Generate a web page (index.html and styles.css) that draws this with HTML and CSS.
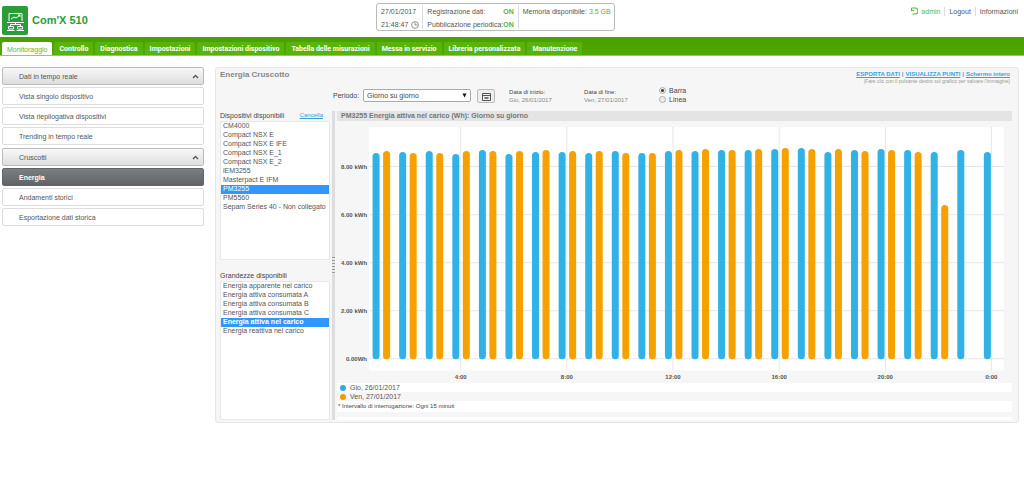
FILE: index.html
```html
<!DOCTYPE html>
<html lang="it">
<head>
<meta charset="utf-8">
<title>Com'X 510</title>
<link rel="stylesheet" href="styles.css">
</head>
<body>
<header class="top">
  <div class="brand">
    <svg class="logo" viewBox="0 0 26 29" aria-hidden="true">
      <rect width="26" height="29" rx="2" fill="#2a9c3a"/>
      <g fill="none" stroke="#fff" stroke-width="1">
        <path d="M7 15V7.500H20V15M5 16.500H22"/>
        <path d="M9 13l3-2 2 1 4-3M16 9h2v2" />
        <path d="M8.500 20v-1.500h10V20M13.500 16.500v2"/>
        <path d="M6.500 20.500h5v2.500h-5zM15.500 20.500h5v2.500h-5z"/>
        <path d="M5 24.500h7.500M14.500 24.500H22"/>
      </g>
    </svg>
    <h1 class="brand-name">Com'X 510</h1>
  </div>
  <div class="status">
    <div class="status-cell">
      <span>27/01/2017</span>
      <span class="clock-row">21:48:47
        <svg class="clock" viewBox="0 0 8 8" aria-hidden="true"><circle cx="4" cy="4" r="3.400" fill="none" stroke="#777" stroke-width=".8"/><path d="M4 1.500V4H6.500" fill="none" stroke="#777" stroke-width=".8"/></svg>
      </span>
    </div>
    <div class="status-cell status-wide">
      <span class="pair">Registrazione dati: <b class="on">ON</b></span>
      <span class="pair">Pubblicazione periodica: <b class="on">ON</b></span>
    </div>
    <div class="status-cell">
      <span>Memoria disponibile: <span class="on">3.5 GB</span></span>
    </div>
  </div>
  <nav class="user" aria-label="Utente">
    <a class="user-link user-name" href="#"><svg class="user-icon" viewBox="0 0 8 8" aria-hidden="true"><path d="M1.500 1v2.500H4M1.500 1H5a2.500 2.500 0 0 1 0 6H2.500" fill="none" stroke="#69b52f" stroke-width="1.100"/></svg>admin</a>
    <a class="user-link" href="#">Logout</a>
    <a class="user-link" href="#">Informazioni</a>
  </nav>
</header>

<nav class="tabs" aria-label="Menu principale">
  <a class="tab tab-active" href="#">Monitoraggio</a>
  <a class="tab" href="#">Controllo</a>
  <a class="tab" href="#">Diagnostica</a>
  <a class="tab" href="#">Impostazioni</a>
  <a class="tab" href="#">Impostazioni dispositivo</a>
  <a class="tab" href="#">Tabella delle misurazioni</a>
  <a class="tab" href="#">Messa in servizio</a>
  <a class="tab" href="#">Libreria personalizzata</a>
  <a class="tab" href="#">Manutenzione</a>
</nav>

<div class="layout">
  <aside class="side">
    <section class="side-group">
      <button class="side-head" type="button">Dati in tempo reale
        <svg class="chevron" viewBox="0 0 7 5" aria-hidden="true"><path d="M1 4L3.500 1.500L6 4" fill="none" stroke="#555" stroke-width="1.300"/></svg>
      </button>
      <a class="side-item" href="#">Vista singolo dispositivo</a>
      <a class="side-item" href="#">Vista riepilogativa dispositivi</a>
      <a class="side-item" href="#">Trending in tempo reale</a>
    </section>
    <section class="side-group">
      <button class="side-head" type="button">Cruscotti
        <svg class="chevron" viewBox="0 0 7 5" aria-hidden="true"><path d="M1 4L3.500 1.500L6 4" fill="none" stroke="#555" stroke-width="1.300"/></svg>
      </button>
      <a class="side-item side-active" href="#">Energia</a>
      <a class="side-item" href="#">Andamenti storici</a>
      <a class="side-item" href="#">Esportazione dati storica</a>
    </section>
  </aside>

  <main class="panel">
    <div class="panel-head">
      <h2 class="panel-title">Energia Cruscotto</h2>
      <div class="export">
        <div class="export-links"><a href="#">ESPORTA DATI</a><i>|</i><a href="#">VISUALIZZA PUNTI</a><i>|</i><a href="#">Schermo intero</a></div>
        <p class="hint">(Fare clic con il pulsante destro sul grafico per salvare l'immagine)</p>
      </div>
    </div>

    <form class="filters">
      <div class="period">
        <label for="period">Periodo:</label>
        <span class="period-box">
          <select id="period" class="period-select"><option>Giorno su giorno</option></select>
          <svg class="caret" viewBox="0 0 5 5" aria-hidden="true"><path d="M.5 .5H4.500L2.500 4.500z" fill="#111"/></svg>
        </span>
      </div>
      <button class="cal" type="button" aria-label="Calendario">
        <svg class="cal-icon" viewBox="0 0 9 9" aria-hidden="true"><path d="M.5 1.500h8v7h-8zM.5 3.500h8" fill="none" stroke="#555"/><path d="M2.500 5h4v2h-4z" fill="#777"/></svg>
      </button>
      <dl class="date"><dt>Data di inizio:</dt><dd>Gio, 26/01/2017</dd></dl>
      <dl class="date"><dt>Data di fine:</dt><dd>Ven, 27/01/2017</dd></dl>
      <div class="kinds">
        <label class="kind"><input class="radio" type="radio" name="kind" checked>Barra</label>
        <label class="kind"><input class="radio" type="radio" name="kind">Linea</label>
      </div>
    </form>

    <div class="work">
      <div class="lists">
        <div class="list-block">
          <div class="list-head"><label for="devices">Dispositivi disponibili</label><a class="clear" href="#">Cancella</a></div>
          <select id="devices" class="list" size="10">
            <option>CM4000</option><option>Compact NSX E</option><option>Compact NSX E IFE</option><option>Compact NSX E_1</option><option>Compact NSX E_2</option><option>iEM3255</option><option>Masterpact E IFM</option><option selected>PM3255</option><option>PM5560</option><option>Sepam Series 40 - Non collegato</option>
          </select>
        </div>
        <div class="list-block">
          <div class="list-head"><label for="measures">Grandezze disponibili</label></div>
          <select id="measures" class="list" size="6">
            <option>Energia apparente nel carico</option><option>Energia attiva consumata A</option><option>Energia attiva consumata B</option><option>Energia attiva consumata C</option><option class="strong" selected>Energia attiva nel carico</option><option>Energia reattiva nel carico</option>
          </select>
        </div>
      </div>
      <div class="splitter"><span class="grip"></span></div>
      <section class="graph">
        <h3 class="graph-title">PM3255 Energia attiva nel carico (Wh): Giorno su giorno</h3>
        <svg id="chart" class="chart" viewBox="0 0 674 262" role="img" aria-label="Energia attiva per ora"></svg>
        <div class="legend">
          <p class="legend-row legend-white"><span class="dot dot-blue"></span>Gio, 26/01/2017</p>
          <p class="legend-row"><span class="dot dot-orange"></span>Ven, 27/01/2017</p>
          <p class="note">* Intervallo di interrogazione: Ogni 15 minuti</p>
        </div>
        <div class="foot"></div>
      </section>
    </div>
  </main>
</div>
<script src="chart.js"></script>
</body>
</html>
```

FILE: styles.css
```css
* { box-sizing: border-box; }
body {
  margin: 0;
  background: #fff;
  color: #555;
  font: 7px/9px "Liberation Sans", Arial, sans-serif;
}
h1, h2, h3, p, dl, dd { margin: 0; }
a { color: inherit; text-decoration: none; }
button, select, input { font: inherit; color: inherit; }

.top {
  display: grid;
  grid-template-columns: 13fr 239px 14fr;
  height: 37px;
  padding: 3px 6px 0 2px;
}
.brand { display: flex; align-items: center; gap: 4px; }
.logo { width: 26px; height: 29px; }
.brand-name { font-size: 11px; line-height: 13px; color: #2a9c3a; }
.status {
  display: flex;
  height: 28px;
  padding: 1px 0;
  border: 1px solid #bbb;
  border-radius: 3px;
}
.status-cell {
  display: flex;
  flex-direction: column;
  padding: 0 4px;
  line-height: 13px;
  white-space: nowrap;
}
.status-cell:first-child { padding-right: 3px; }
.status-cell + .status-cell { border-left: 1px solid #ddd; }
.status-wide { width: 96px; }
.pair { display: flex; justify-content: space-between; }
.clock-row { display: flex; align-items: center; gap: 3px; }
.clock { width: 8px; height: 8px; }
.on { color: #5cb531; }
.user { display: flex; justify-content: flex-end; padding-top: 4px; }
.user-link { padding: 0 4px; }
.user-link:last-child { padding-right: 0; }
.user-link + .user-link { border-left: 1px solid #ddd; height: 9px; }
.user-name { display: flex; gap: 3px; height: 9px; color: #69b52f; }
.user-icon { width: 8px; height: 8px; }

.tabs {
  display: flex;
  gap: 2px;
  height: 19px;
  padding: 5px 2px 0;
  background: linear-gradient(#4aa000, #50a800);
  border-bottom: 1px solid #8fcb60;
}
.tab {
  padding: 3px 5px 0;
  border-radius: 2px 2px 0 0;
  background: #58b40c;
  color: #fff;
  font-family: Roboto, "Liberation Sans", sans-serif;
  font-weight: bold;
  line-height: 9px;
  white-space: nowrap;
}
.tab-active {
  background: #fff;
  color: #69b52f;
  font-family: "Liberation Sans", Arial, sans-serif;
  font-weight: normal;
}

.layout { display: flex; align-items: flex-start; gap: 11px; padding: 11px 5px 0 2px; }
.side { flex: 0 0 202px; display: flex; flex-direction: column; gap: 3px; }
.side-group { display: flex; flex-direction: column; gap: 2px; }
.side-head, .side-item {
  display: flex;
  align-items: center;
  justify-content: space-between;
  height: 18px;
  padding: 0 4px 0 16px;
  border: 1px solid #ddd;
  border-radius: 2px;
  background: #fff;
  text-align: left;
}
.side-head { border-color: #bbb; background: linear-gradient(#f8f8f8, #dedede); }
.side-active {
  border-color: #606467;
  background: linear-gradient(#7b7f82, #606467);
  color: #fff;
  font-weight: bold;
}
.chevron { width: 7px; height: 5px; }

.panel {
  flex: 1;
  min-width: 0;
  padding: 2px 6px 2px 4px;
  border: 1px solid #e6e6e6;
  border-radius: 3px;
  background: #f6f6f6;
}
.panel-head { display: flex; justify-content: space-between; height: 18px; }
.panel-title { font-size: 8px; line-height: 10px; color: #888; }
.export { padding: 1px 2px 0 0; text-align: right; }
.export-links { color: #3b9fdc; font-size: 6px; font-weight: bold; line-height: 7px; }
.export-links a { text-decoration: underline; }
.export-links i { margin: 0 2px; font-style: normal; }
.hint { font-size: 5px; line-height: 6px; color: #999; }

.filters { display: flex; align-items: flex-start; height: 23px; padding-left: 113px; color: #444; }
.period { display: flex; align-items: center; gap: 4px; margin: 1px 6px 0 0; }
.period-box { display: grid; align-items: center; }
.period-select {
  grid-area: 1 / 1;
  width: 108px;
  height: 13px;
  padding: 0 3px;
  border: 1px solid #aaa;
  border-radius: 2px;
  background: #fff;
  appearance: none;
}
.caret { grid-area: 1 / 1; justify-self: end; width: 5px; height: 5px; margin-right: 4px; pointer-events: none; }
.cal {
  display: grid;
  place-items: center;
  width: 18px;
  height: 14px;
  margin-top: 1px;
  padding: 0;
  border: 1px solid #bbb;
  border-radius: 2px;
  background: #eee;
}
.cal-icon { width: 9px; height: 9px; }
.date { width: 75px; font-size: 6px; line-height: 8px; }
.date dd { color: #888; }
.cal + .date { margin-left: 14px; }
.kinds { display: flex; flex-direction: column; margin-top: -2px; }
.kind { display: flex; align-items: center; gap: 3px; }
.radio {
  width: 7px;
  height: 7px;
  margin: 0;
  border: 1px solid #aaa;
  border-radius: 50%;
  background: #eee;
  appearance: none;
}
.radio:checked { background: radial-gradient(#444 0 1px, #eee 2px); }

.work { display: flex; }
.lists { flex: 0 0 110px; display: flex; flex-direction: column; gap: 11px; }
.list-block { display: flex; flex-direction: column; flex: 1; }
.list-head { display: flex; justify-content: space-between; height: 10px; padding-right: 7px; color: #444; }
.clear { color: #3b9fdc; font-size: 6px; text-decoration: underline; }
.list {
  flex: 1;
  width: 100%;
  padding: 0;
  border: 1px solid #e8e8e8;
  border-radius: 2px;
  background: #fff;
  outline: 0;
  overflow: hidden;
}
.list option { min-height: 0; height: 9px; padding: 0 0 0 2px; line-height: 9px; }
.list option:checked { background: #3297fd linear-gradient(#3297fd, #3297fd); color: #fff; -webkit-text-fill-color: #fff; }
.list .strong { font-weight: bold; }
.splitter {
  flex: 0 0 3px;
  display: grid;
  align-items: center;
  margin: 0 2px;
  background: #ddd;
}
.grip { height: 17px; background: repeating-linear-gradient(#999 0 1px, #e8e8e8 1px 3px); }
.graph { flex: 1; min-width: 0; }
.graph-title { padding-left: 4px; background: #e4e4e4; color: #777; font-size: 7px; line-height: 10px; }
.chart { display: block; width: 100%; font: bold 6px "Liberation Sans", Arial, sans-serif; }
.plot { fill: #fff; }
.grid { stroke: #e6e6e6; stroke-width: 1; }
.axis { fill: #555; }
.bar-blue { fill: #30b2e7; }
.bar-orange { fill: #f5a100; }
.legend-row { display: flex; align-items: center; gap: 4px; padding-left: 3px; }
.legend-white, .foot { background: #fff; }
.dot { width: 6px; height: 6px; border-radius: 50%; }
.dot-blue { background: #30a8ee; }
.dot-orange { background: #f79800; }
.note { padding-left: 1px; background: #fff; color: #444; font-size: 6px; line-height: 11px; }
.foot { height: 3px; margin-top: 5px; }
```

FILE: chart.js
```js
const NS = "http://www.w3.org/2000/svg";
const chart = document.getElementById("chart");
const BASE = 238, LEFT = 39, PITCH = 26.54, BAR = 7;

const blue = [206, 207, 208, 205, 209, 205, 207, 207, 206, 208, 206, 208, 208, 209, 209, 210, 211, 207, 209, 210, 209, 207, 209, 207];
const orange = [208, 206, 206, 208, 208, 208, 209, 208, 208, 206, 206, 209, 210, 209, 210, 211, 210, 210, 208, 209, 207, 154];

function add(name, attrs, text) {
  const node = document.createElementNS(NS, name);
  for (const key in attrs) node.setAttribute(key, attrs[key]);
  if (text) node.textContent = text;
  chart.append(node);
}

add("rect", { class: "plot", x: 32, y: 6, width: 634, height: 243 });
["0.00Wh", "2.00 kWh", "4.00 kWh", "6.00 kWh", "8.00 kWh"].forEach((label, i) => {
  const y = 237.5 - i * 48;
  add("line", { class: "grid", x1: 32, x2: 666, y1: y, y2: y });
  add("text", { class: "axis", x: 30, y: y + 2, "text-anchor": "end" }, label);
});
["4:00", "8:00", "12:00", "16:00", "20:00", "0:00"].forEach((label, i) => {
  const x = 123.5 + i * 106;
  add("line", { class: "grid", x1: x, x2: x, y1: 6, y2: 249 });
  add("text", { class: "axis", x: x, y: 258, "text-anchor": "middle" }, label);
});
[[blue, "bar-blue", -3.5], [orange, "bar-orange", 7]].forEach(([values, cls, shift]) => {
  values.forEach((h, i) => {
    add("rect", { class: cls, x: LEFT + shift + i * PITCH, y: BASE - h, width: BAR, height: h, rx: 3.5 });
  });
});
```
